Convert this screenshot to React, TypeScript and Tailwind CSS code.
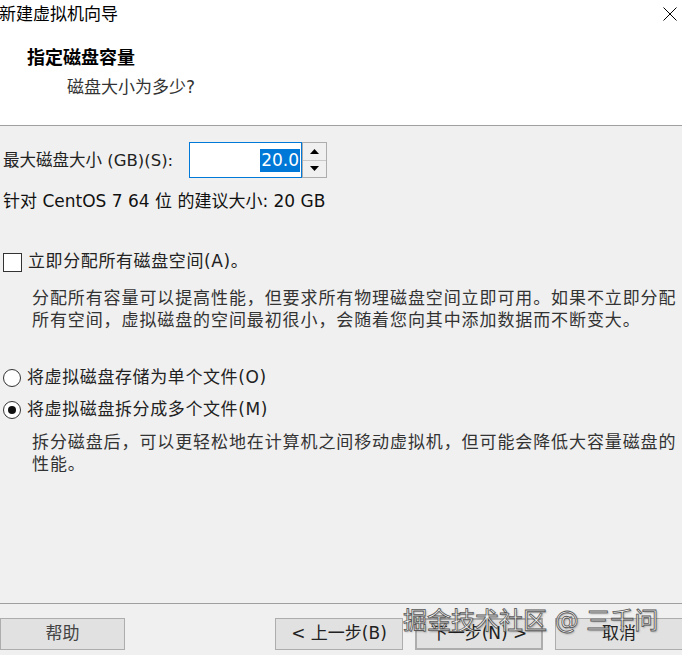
import React from "react";

const F = { fontFamily: '"DejaVu Sans", "Noto Sans CJK SC", sans-serif' };

function Btn({ children, className = "" }: { children: React.ReactNode; className?: string }) {
  return (
    <div
      className={`h-[32px] flex items-center justify-center bg-[#e1e1e1] border border-[#adadad] text-[17px] text-[#222] ${className}`}
    >
      {children}
    </div>
  );
}

export default function App() {
  return (
    <div className="relative w-[682px] h-[655px] bg-[#f0f0f0] overflow-hidden text-black" style={F}>
      {/* header */}
      <div className="h-[126px] bg-white border-b border-[#a0a0a0] flex flex-col">
        <div className="h-[28px] flex items-center justify-between">
          <span className="text-[17px] leading-[28px] -ml-[1px]">新建虚拟机向导</span>
          <svg width="14" height="14" viewBox="0 0 14 14" className="mr-[5px] -mt-[1px]">
            <path d="M0.5 0.5 L13.5 13.5 M13.5 0.5 L0.5 13.5" stroke="#000" strokeWidth="1" fill="none" />
          </svg>
        </div>
        <div className="mt-[18px] pl-[27px] text-[18px] leading-[24px] font-bold">指定磁盘容量</div>
        <div className="mt-[5px] pl-[67px] text-[17px] leading-[24px] text-[#333]">磁盘大小为多少?</div>
      </div>

      {/* body */}
      <div className="pl-[3px] flex flex-col">
        <div className="mt-[16px] h-[36px] flex items-center">
          <span className="w-[186px] text-[16.5px] leading-[24px] mt-[2px] text-[#222] whitespace-nowrap">最大磁盘大小 (GB)(S):</span>
          <div className="flex h-[36px]">
            <div className="w-[113px] h-full border border-[#0078d7] bg-white flex items-center justify-end pr-[1px]">
              <span className="bg-[#0078d7] text-white text-[17px] leading-[23px] px-[1px]">20.0</span>
            </div>
            <div className="w-[25px] h-full border border-[#adadad] flex flex-col bg-[#f0f0f0]">
              <div className="flex-1 border-b border-[#c8c8c8] flex items-center justify-center">
                <svg width="9" height="5" viewBox="0 0 9 5"><path d="M4.5 0 L9 5 L0 5 Z" fill="#000" /></svg>
              </div>
              <div className="flex-1 flex items-center justify-center">
                <svg width="9" height="5" viewBox="0 0 9 5"><path d="M0 0 L9 0 L4.5 5 Z" fill="#000" /></svg>
              </div>
            </div>
          </div>
        </div>

        <div className="mt-[11px] text-[17px] leading-[24px] text-[#111] whitespace-nowrap">针对 CentOS 7 64 位 的建议大小: 20 GB</div>

        <div className="mt-[37px] h-[24px] flex items-center">
          <div className="w-[19px] h-[19px] border border-[#333] bg-white shrink-0" />
          <span className="ml-[6px] text-[17px] tracking-[0.6px] text-[#222]">立即分配所有磁盘空间(A)。</span>
        </div>

        <div className="mt-[13px] pl-[29px] text-[17px] leading-[22px] tracking-[0.9px] text-[#333] whitespace-nowrap">
          <div>分配所有容量可以提高性能，但要求所有物理磁盘空间立即可用。如果不立即分配</div>
          <div>所有空间，虚拟磁盘的空间最初很小，会随着您向其中添加数据而不断变大。</div>
        </div>

        <div className="mt-[35px] h-[24px] flex items-center">
          <div className="w-[18px] h-[18px] rounded-full border border-[#333] bg-white shrink-0" />
          <span className="ml-[6px] text-[17px] tracking-[0.6px] text-[#222]">将虚拟磁盘存储为单个文件(O)</span>
        </div>
        <div className="mt-[8px] h-[24px] flex items-center">
          <div className="w-[18px] h-[18px] rounded-full border border-[#333] bg-white shrink-0 flex items-center justify-center">
            <div className="w-[8px] h-[8px] rounded-full bg-[#111]" />
          </div>
          <span className="ml-[6px] text-[17px] tracking-[0.6px] text-[#222]">将虚拟磁盘拆分成多个文件(M)</span>
        </div>

        <div className="mt-[9px] pl-[29px] text-[17px] leading-[22px] tracking-[0.9px] text-[#333] whitespace-nowrap">
          <div>拆分磁盘后，可以更轻松地在计算机之间移动虚拟机，但可能会降低大容量磁盘的</div>
          <div>性能。</div>
        </div>
      </div>

      {/* footer */}
      <div className="absolute left-0 right-0 top-[603px] border-t border-[#a0a0a0]" />
      <div className="absolute left-0 top-[618px] w-[700px] flex">
        <Btn className="w-[125px] text-[#444]">帮助</Btn>
        <Btn className="ml-[150px] w-[128px]">&lt; 上一步(B)</Btn>
        <Btn className="ml-[12px] w-[128px] border-2 border-[#0078d7]">下一步(N) &gt;</Btn>
        <Btn className="ml-[12px] w-[128px]">取消</Btn>
      </div>

      {/* watermark */}
      <div
        className="absolute left-[403px] top-[605px] text-[24px] leading-[32px] text-white/90 whitespace-nowrap [-webkit-text-stroke:0.8px_#555] [text-shadow:1px_1px_2px_rgba(0,0,0,0.35)]"
      >
        掘金技术社区 @ 三千问
      </div>
    </div>
  );
}
